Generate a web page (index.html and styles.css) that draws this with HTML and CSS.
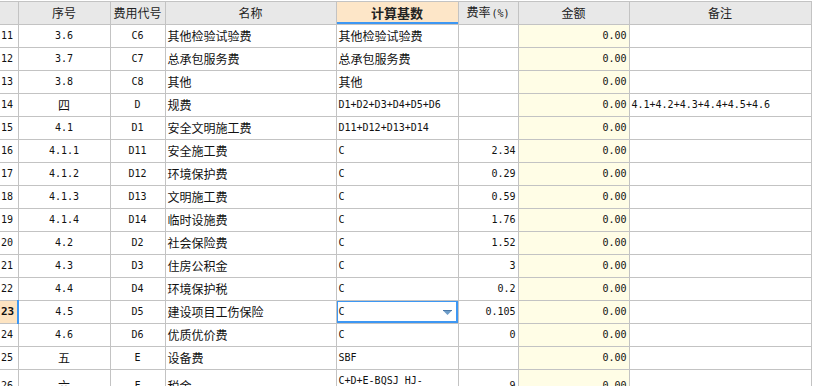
FILE: index.html
```html
<!DOCTYPE html>
<html lang="zh">
<head>
<meta charset="utf-8">
<link rel="stylesheet" href="styles.css">
</head>
<body>
<div class="wrap">
<table class="grid">
<colgroup>
<col class="c-rn"><col class="c-no"><col class="c-code"><col class="c-name"><col class="c-base"><col class="c-rate"><col class="c-amt"><col class="c-note">
</colgroup>
<thead>
<tr>
<th class="rn"></th><th>序号</th><th>费用代号</th><th>名称</th><th class="active">计算基数</th><th>费率<span class="pct">(%)</span></th><th>金额</th><th>备注</th>
</tr>
</thead>
<tbody>
<tr><td class="rn m">11</td><td class="ctr m">3.6</td><td class="ctr m">C6</td><td>其他检验试验费</td><td>其他检验试验费</td><td class="num m"></td><td class="amt m">0.00</td><td></td></tr>
<tr><td class="rn m">12</td><td class="ctr m">3.7</td><td class="ctr m">C7</td><td>总承包服务费</td><td>总承包服务费</td><td class="num m"></td><td class="amt m">0.00</td><td></td></tr>
<tr><td class="rn m">13</td><td class="ctr m">3.8</td><td class="ctr m">C8</td><td>其他</td><td>其他</td><td class="num m"></td><td class="amt m">0.00</td><td></td></tr>
<tr><td class="rn m">14</td><td class="ctr">四</td><td class="ctr m">D</td><td>规费</td><td class="m">D1+D2+D3+D4+D5+D6</td><td class="num m"></td><td class="amt m">0.00</td><td class="m">4.1+4.2+4.3+4.4+4.5+4.6</td></tr>
<tr><td class="rn m">15</td><td class="ctr m">4.1</td><td class="ctr m">D1</td><td>安全文明施工费</td><td class="m">D11+D12+D13+D14</td><td class="num m"></td><td class="amt m">0.00</td><td></td></tr>
<tr><td class="rn m">16</td><td class="ctr m">4.1.1</td><td class="ctr m">D11</td><td>安全施工费</td><td class="m">C</td><td class="num m">2.34</td><td class="amt m">0.00</td><td></td></tr>
<tr><td class="rn m">17</td><td class="ctr m">4.1.2</td><td class="ctr m">D12</td><td>环境保护费</td><td class="m">C</td><td class="num m">0.29</td><td class="amt m">0.00</td><td></td></tr>
<tr><td class="rn m">18</td><td class="ctr m">4.1.3</td><td class="ctr m">D13</td><td>文明施工费</td><td class="m">C</td><td class="num m">0.59</td><td class="amt m">0.00</td><td></td></tr>
<tr><td class="rn m">19</td><td class="ctr m">4.1.4</td><td class="ctr m">D14</td><td>临时设施费</td><td class="m">C</td><td class="num m">1.76</td><td class="amt m">0.00</td><td></td></tr>
<tr><td class="rn m">20</td><td class="ctr m">4.2</td><td class="ctr m">D2</td><td>社会保险费</td><td class="m">C</td><td class="num m">1.52</td><td class="amt m">0.00</td><td></td></tr>
<tr><td class="rn m">21</td><td class="ctr m">4.3</td><td class="ctr m">D3</td><td>住房公积金</td><td class="m">C</td><td class="num m">3</td><td class="amt m">0.00</td><td></td></tr>
<tr><td class="rn m">22</td><td class="ctr m">4.4</td><td class="ctr m">D4</td><td>环境保护税</td><td class="m">C</td><td class="num m">0.2</td><td class="amt m">0.00</td><td></td></tr>
<tr class="cur"><td class="rn m sel">23</td><td class="ctr m">4.5</td><td class="ctr m">D5</td><td>建设项目工伤保险</td><td class="m editing"><div class="edit"><span>C</span><svg class="dd" width="9" height="5" viewBox="0 0 9 5"><rect x="0" y="0" width="9" height="1" fill="#4a78a8"/><path d="M0.5 1 L8.5 1 L4.5 5 Z" fill="#6d9cc8"/></svg></div></td><td class="num m">0.105</td><td class="amt m">0.00</td><td></td></tr>
<tr><td class="rn m">24</td><td class="ctr m">4.6</td><td class="ctr m">D6</td><td>优质优价费</td><td class="m">C</td><td class="num m">0</td><td class="amt m">0.00</td><td></td></tr>
<tr><td class="rn m">25</td><td class="ctr">五</td><td class="ctr m">E</td><td>设备费</td><td class="m">SBF</td><td class="num m"></td><td class="amt m">0.00</td><td></td></tr>
<tr class="tall"><td class="rn m">26</td><td class="ctr">六</td><td class="ctr m">F</td><td>税金</td><td class="m wrapcell">C+D+E-BQSJ_HJ-BQSJ_JSF</td><td class="num m">9</td><td class="amt m">0.00</td><td></td></tr>
</tbody>
</table>
</div>
</body>
</html>
```
FILE: styles.css
```css
html, body {
  margin: 0;
  padding: 0;
  background: #ffffff;
}
.wrap {
  padding-top: 1px;
}
.grid {
  border-collapse: collapse;
  table-layout: fixed;
  width: 811px;
  font-family: "Noto Sans CJK SC", "DejaVu Sans", sans-serif;
  font-size: 12px;
  color: #111;
}
.c-rn { width: 18px; }
.c-no { width: 92px; }
.c-code { width: 55px; }
.c-name { width: 171px; }
.c-base { width: 122px; }
.c-rate { width: 60px; }
.c-amt { width: 111px; }
.c-note { width: 182px; }
.grid th, .grid td {
  border: 1px solid #c3c3c3;
  height: 22px;
  padding: 0 2px;
  white-space: nowrap;
  overflow: hidden;
  line-height: 14px;
  vertical-align: middle;
}
.grid th {
  background: #e8e8e8;
  font-weight: normal;
  text-align: center;
  font-size: 12px;
  color: #222;
}
.grid th.rn {
  border-left: none;
}
.grid th.active {
  background: #fde6c8;
  font-weight: bold;
  font-size: 13px;
  color: #222;
  box-shadow: inset 0 -2px 0 #3d97f3;
}
.pct {
  font-family: "DejaVu Sans Mono", monospace;
  font-size: 10px;
  margin-left: 1px;
}
.grid td.rn {
  border-left: none;
  padding: 0 0 0 1px;
  text-align: left;
  background: #fff;
}
.grid td.sel {
  background: #fde4c2;
  font-weight: bold;
  font-size: 11px;
  border-right: 2px solid #3d97f3;
}
.m {
  font-family: "DejaVu Sans Mono", "Noto Sans CJK SC", monospace;
  font-size: 10px;
}
.ctr { text-align: center; }
.num { text-align: right; }
.amt {
  text-align: right;
  background: #fffde6;
}
.editing {
  position: relative;
}
.edit {
  position: absolute;
  left: -1px;
  top: -1px;
  right: 0;
  bottom: 0;
  border: 2px solid #3d97f3;
  display: flex;
  align-items: center;
  justify-content: space-between;
  padding: 0 4px 0 1px;
}
.dd {
  display: block;
  margin-top: 1px;
}
.tall td {
  height: 32px;
}
.grid td.wrapcell {
  white-space: normal;
  line-height: 11px;
}
```
